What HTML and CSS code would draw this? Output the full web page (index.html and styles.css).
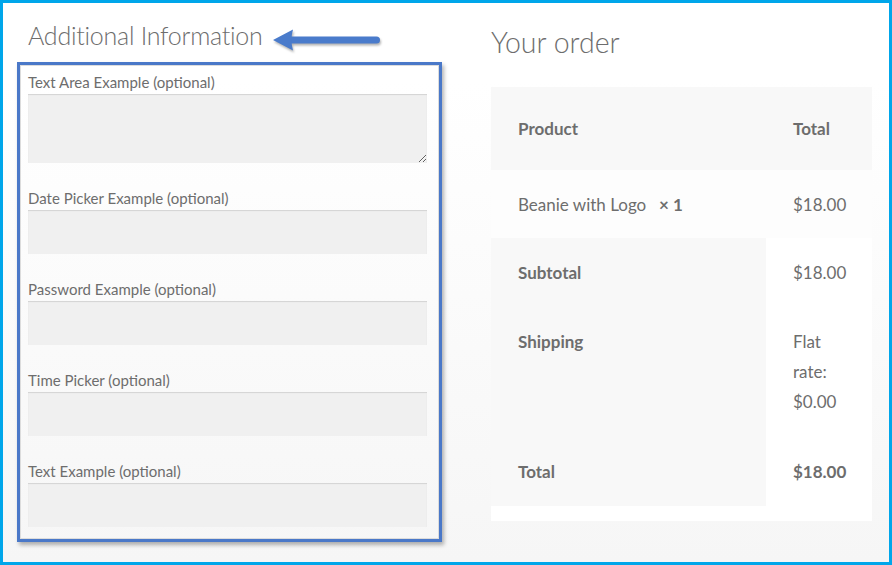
FILE: index.html
```html
<!DOCTYPE html>
<html>
<head>
<meta charset="utf-8">
<link rel="stylesheet" href="styles.css">
</head>
<body>
<div class="frame">
  <div class="left">
    <div class="head-row">
      <h3 class="title">Additional Information</h3>
      <svg class="arrow" width="112" height="26" viewBox="0 0 112 26">
        <rect x="16" y="8.5" width="93" height="7" rx="3.5" fill="#4a7bcb"/>
        <path d="M2 12 L22 1.5 Q19 12 22 22.5 Z" fill="#4a7bcb"/>
      </svg>
    </div>
    <div class="highlight">
      <div class="field">
        <label class="label">Text Area Example (optional)</label>
        <textarea class="input area"></textarea>
      </div>
      <div class="field">
        <label class="label">Date Picker Example (optional)</label>
        <input class="input" type="text">
      </div>
      <div class="field">
        <label class="label">Password Example (optional)</label>
        <input class="input" type="password">
      </div>
      <div class="field">
        <label class="label">Time Picker (optional)</label>
        <input class="input" type="text">
      </div>
      <div class="field last">
        <label class="label">Text Example (optional)</label>
        <input class="input" type="text">
      </div>
    </div>
  </div>
  <div class="right">
    <h3 class="order-title">Your order</h3>
    <div class="order-box">
      <table class="order">
        <thead>
          <tr class="head">
            <th class="c1">Product</th>
            <th class="c2">Total</th>
          </tr>
        </thead>
        <tbody>
          <tr class="item">
            <td class="c1">Beanie with Logo&nbsp; <strong>× 1</strong></td>
            <td class="c2">$18.00</td>
          </tr>
        </tbody>
        <tfoot>
          <tr class="foot first">
            <th class="c1">Subtotal</th>
            <td class="c2">$18.00</td>
          </tr>
          <tr class="foot">
            <th class="c1">Shipping</th>
            <td class="c2">Flat<br>rate:<br>$0.00</td>
          </tr>
          <tr class="foot lastrow">
            <th class="c1">Total</th>
            <td class="c2"><strong>$18.00</strong></td>
          </tr>
        </tfoot>
      </table>
    </div>
  </div>
</div>
</body>
</html>
```

FILE: styles.css
```css
html, body {
  margin: 0;
  padding: 0;
}
body {
  font-family: Lato, "Liberation Sans", sans-serif;
  color: #6d6d6d;
}
.frame {
  width: 892px;
  height: 565px;
  box-sizing: border-box;
  border: 3px solid #00a6ea;
  display: flex;
  gap: 49px;
  padding: 0 17px 0 14px;
  background: linear-gradient(to bottom, #ffffff 0%, #ffffff 14%, #f6f6f6 100%);
}
.left {
  width: 425px;
  flex: none;
  display: flex;
  flex-direction: column;
}
.head-row {
  height: 59px;
  display: flex;
  align-items: flex-start;
  padding-left: 11px;
  box-sizing: border-box;
}
.title {
  margin: 0;
  margin-top: 16px;
  width: 243px;
  font-size: 25px;
  line-height: 32px;
  font-weight: 300;
  letter-spacing: -0.25px;
  color: #6d6d6d;
  white-space: nowrap;
}
.arrow {
  margin-top: 25px;
  filter: drop-shadow(1px 2px 1px rgba(0, 0, 0, 0.3));
}
.highlight {
  border: 3px solid #4a78c8;
  padding: 6px 12px 12px 8px;
  box-shadow: inset 0 0 0 1px #dcdcdc, 2px 3px 4px rgba(0, 0, 0, 0.3);
  display: flex;
  flex-direction: column;
}
.field {
  display: flex;
  flex-direction: column;
  margin-bottom: 24px;
}
.field.last {
  margin-bottom: 0;
}
.label {
  font-size: 15px;
  line-height: 22px;
  margin-bottom: 1px;
  color: #6d6d6d;
}
.input {
  display: block;
  height: 44px;
  width: 100%;
  box-sizing: border-box;
  border: none;
  margin: 0;
  background: #f0f0f0;
  box-shadow: inset 0 1px 1px rgba(0, 0, 0, 0.12);
  font-family: inherit;
  outline: none;
}
.area {
  height: 69px;
  resize: vertical;
}
.right {
  width: 381px;
  flex: none;
}
.order-title {
  margin: 0;
  margin-top: 21px;
  height: 63px;
  font-size: 28.5px;
  line-height: 36px;
  font-weight: 300;
  color: #6d6d6d;
}
.order-box {
  background: #ffffff;
  padding-bottom: 15px;
}
.order {
  width: 100%;
  border-collapse: collapse;
  font-size: 17px;
  line-height: 30px;
  color: #6d6d6d;
}
.order th, .order td {
  text-align: left;
  vertical-align: top;
  padding: 20px 0 19px 27px;
}
.order th {
  font-weight: 700;
}
.order .c1 {
  width: 248px;
}
.order .c2 {
  width: 79px;
}
.head th {
  background: #f8f8f8;
  padding-top: 27px;
  padding-bottom: 26px;
}
.item td {
  background: #fdfdfd;
  padding-top: 20px;
  padding-bottom: 18px;
}
.item strong {
  margin-left: 4px;
}
.foot th {
  background: #f8f8f8;
}
.foot.lastrow th, .foot.lastrow td {
  padding-top: 21px;
}
strong {
  font-weight: 700;
}
```
